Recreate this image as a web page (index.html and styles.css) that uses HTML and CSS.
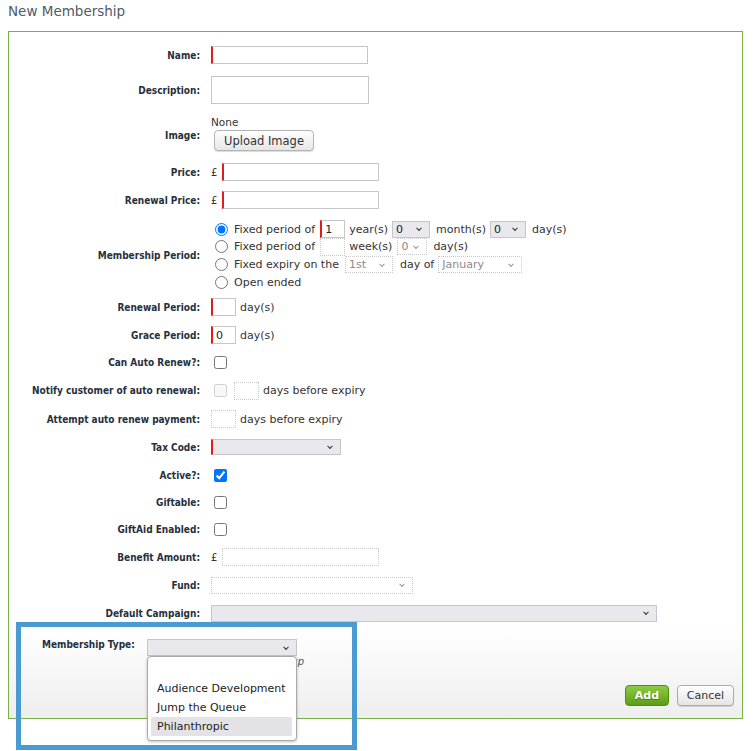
FILE: index.html
```html
<!DOCTYPE html>
<html>
<head>
  <meta charset="utf-8">
  <link rel="stylesheet" href="styles.css">
</head>
<body>
  <h1 class="page-title">New Membership</h1>

  <div class="panel">
    <div class="form-body">
      <div class="form-row">
        <label class="form-label">Name:</label>
        <div class="form-field"><input type="text" class="txt required w-name"></div>
      </div>
      <div class="form-row row-desc">
        <label class="form-label">Description:</label>
        <div class="form-field"><textarea class="txt w-desc"></textarea></div>
      </div>
      <div class="form-row row-image">
        <label class="form-label">Image:</label>
        <div class="form-field">
          <div class="image-name">None</div>
          <button type="button" class="btn btn-upload">Upload Image</button>
        </div>
      </div>
      <div class="form-row">
        <label class="form-label">Price:</label>
        <div class="form-field inline"><span class="currency">£</span><input type="text" class="txt required w-price"></div>
      </div>
      <div class="form-row">
        <label class="form-label">Renewal Price:</label>
        <div class="form-field inline"><span class="currency">£</span><input type="text" class="txt required w-price"></div>
      </div>
      <div class="form-row row-period">
        <label class="form-label">Membership Period:</label>
        <div class="form-field">
          <div class="period-line inline">
            <input type="radio" name="period" checked>
            <span>Fixed period of</span>
            <input type="text" class="txt required w-num" value="1">
            <span>year(s)</span>
            <span class="select-wrap"><select class="sel w-s38"><option>0</option></select></span>
            <span class="after-sel">month(s)</span>
            <span class="select-wrap"><select class="sel w-s36"><option>0</option></select></span>
            <span class="after-sel">day(s)</span>
          </div>
          <div class="period-line inline">
            <input type="radio" name="period">
            <span>Fixed period of</span>
            <input type="text" class="txt off w-num" disabled>
            <span>week(s)</span>
            <span class="select-wrap off"><select class="sel w-s30" disabled><option>0</option></select></span>
            <span class="after-sel">day(s)</span>
          </div>
          <div class="period-line inline">
            <input type="radio" name="period">
            <span>Fixed expiry on the</span>
            <span class="select-wrap off"><select class="sel w-s48" disabled><option>1st</option></select></span>
            <span class="gap-l">day of</span>
            <span class="select-wrap off"><select class="sel w-s84" disabled><option>January</option></select></span>
          </div>
          <div class="period-line inline">
            <input type="radio" name="period">
            <span>Open ended</span>
          </div>
        </div>
      </div>
      <div class="form-row">
        <label class="form-label">Renewal Period:</label>
        <div class="form-field inline"><input type="text" class="txt required w-num"><span>day(s)</span></div>
      </div>
      <div class="form-row">
        <label class="form-label">Grace Period:</label>
        <div class="form-field inline"><input type="text" class="txt required w-num" value="0"><span>day(s)</span></div>
      </div>
      <div class="form-row row-check">
        <label class="form-label">Can Auto Renew?:</label>
        <div class="form-field"><input type="checkbox"></div>
      </div>
      <div class="form-row">
        <label class="form-label">Notify customer of auto renewal:</label>
        <div class="form-field inline"><input type="checkbox" disabled><input type="text" class="txt off w-num" disabled><span>days before expiry</span></div>
      </div>
      <div class="form-row">
        <label class="form-label">Attempt auto renew payment:</label>
        <div class="form-field inline"><input type="text" class="txt off w-num" disabled><span>days before expiry</span></div>
      </div>
      <div class="form-row row-tax">
        <label class="form-label">Tax Code:</label>
        <div class="form-field"><span class="select-wrap"><select class="sel required w-tax"><option></option></select></span></div>
      </div>
      <div class="form-row row-check">
        <label class="form-label">Active?:</label>
        <div class="form-field"><input type="checkbox" checked></div>
      </div>
      <div class="form-row row-check">
        <label class="form-label">Giftable:</label>
        <div class="form-field"><input type="checkbox"></div>
      </div>
      <div class="form-row row-check">
        <label class="form-label">GiftAid Enabled:</label>
        <div class="form-field"><input type="checkbox"></div>
      </div>
      <div class="form-row">
        <label class="form-label">Benefit Amount:</label>
        <div class="form-field inline"><span class="currency">£</span><input type="text" class="txt off w-price" disabled></div>
      </div>
      <div class="form-row">
        <label class="form-label">Fund:</label>
        <div class="form-field"><span class="select-wrap off"><select class="sel w-fund" disabled><option></option></select></span></div>
      </div>
      <div class="form-row">
        <label class="form-label">Default Campaign:</label>
        <div class="form-field"><span class="select-wrap"><select class="sel w-campaign"><option></option></select></span></div>
      </div>
    </div>

    <div class="panel-footer">
      <div class="type-row">
        <label class="type-label">Membership Type:</label>
        <div class="type-field">
          <span class="select-wrap"><select class="sel w-type"><option></option></select></span>
          <div class="type-link"><a href="#">Setup</a></div>
          <ul class="dropdown-list">
            <li></li>
            <li>Audience Development</li>
            <li>Jump the Queue</li>
            <li class="hover">Philanthropic</li>
          </ul>
        </div>
      </div>
      <div class="actions">
        <button type="button" class="btn btn-add">Add</button>
        <button type="button" class="btn btn-cancel">Cancel</button>
      </div>
    </div>
  </div>

  <div class="callout"></div>
</body>
</html>
```

FILE: styles.css
```css
/* Общие стили */
body {
  margin: 0;
  min-height: 100vh;
  font-family: "DejaVu Sans", Verdana, sans-serif;
  font-size: 11px;
  color: #333;
  background: #fff;
}

.page-title {
  margin: 0;
  padding: 3px 8px 0;
  height: 28px;
  font-size: 13.5px;
  font-weight: normal;
  color: #4f5b66;
}

/* Панель формы */
.panel {
  margin: 0 11px 0 8px;
  border: 1px solid #7ab044;
}

.form-body {
  padding-top: 9px;
}

.form-row {
  display: grid;
  grid-template-columns: 191px 1fr;
  column-gap: 11px;
  align-items: center;
  padding: 5px 0;
}

.form-row.row-desc {
  padding: 7px 0 6px;
}

.form-row.row-image {
  padding: 6px 0 7px;
}

.form-row.row-image .form-label {
  padding-top: 3px;
}

.form-row.row-period {
  padding: 6px 0 2px;
}

.form-row.row-check {
  padding: 4px 0;
}

.form-row.row-tax {
  padding: 5px 0 6px;
}

.form-label {
  text-align: right;
  font-family: "DejaVu Sans Condensed", "DejaVu Sans", sans-serif;
  font-weight: bold;
  font-size: 10px;
  color: #26303c;
}

.form-field {
  min-height: 18px;
  display: flex;
  flex-direction: column;
  justify-content: center;
  align-items: flex-start;
}

.form-field.inline,
.inline {
  flex-direction: row;
  justify-content: flex-start;
  align-items: center;
  gap: 4px;
}

/* Поля ввода */
.txt {
  box-sizing: border-box;
  height: 18px;
  margin: 0;
  padding: 0 3px;
  border: 1px solid #c6c6c6;
  font-family: inherit;
  font-size: 11px;
  color: #222;
  background: #fff;
}

.txt.required {
  border-left: 2px solid #e41b1b;
}

.txt.off {
  border: 1px dotted #c8c8c8;
  background: #fff;
}

textarea.txt {
  display: block;
  resize: none;
}

.w-name { width: 157px; }
.w-desc { width: 158px; height: 28px; }
.w-price { width: 157px; }
.w-num { width: 25px; }

.currency {
  width: 7px;
  font-size: 10px;
}

/* Выпадающие списки */
.select-wrap {
  position: relative;
  display: inline-block;
  line-height: 0;
}

.select-wrap::after {
  content: "";
  position: absolute;
  right: 9px;
  top: 50%;
  width: 3px;
  height: 3px;
  border-right: 1px solid #333;
  border-bottom: 1px solid #333;
  transform: translateY(-70%) rotate(45deg);
  pointer-events: none;
}

.select-wrap.off::after {
  border-color: #999;
}

.sel {
  -webkit-appearance: none;
  appearance: none;
  box-sizing: border-box;
  height: 17px;
  margin: 0;
  padding: 0 3px;
  border: 1px solid #c5c5cb;
  border-radius: 0;
  background: #e9e9ed;
  font-family: inherit;
  font-size: 11px;
  color: #222;
  outline: none;
}

.sel.required {
  border-left: 2px solid #e41b1b;
}

.sel:disabled {
  border: 1px dotted #c8c8c8;
  background: #fff;
  color: #8a8a8a;
  opacity: 1;
}

.w-s38 { width: 38px; }
.w-s36 { width: 36px; }
.w-s30 { width: 30px; }
.w-s48 { width: 48px; }
.w-s84 { width: 84px; }
.w-tax { width: 130px; height: 16px; }
.w-fund { width: 202px; }
.w-campaign { width: 446px; }
.w-type { width: 150px; }

.period-line {
  display: flex;
  height: 17.7px;
}

.period-line:first-child {
  height: 18px;
}

.period-line input[type="radio"] {
  margin: 0 2px 0 4px;
}

.period-line .txt {
  margin-left: 1px;
}

.period-line .w-s30 {
  margin-left: 1px;
}

.period-line .w-s48 {
  margin-left: 2px;
}

.after-sel {
  margin-left: 2px;
}

.gap-l {
  margin-left: 3px;
}

input[type="checkbox"] {
  margin: 3px;
}

.image-name {
  line-height: 13px;
  margin-bottom: 1px;
  font-size: 10.5px;
  color: #333;
}

/* Кнопки */
.btn {
  font-family: inherit;
  font-size: 11px;
  cursor: pointer;
  border-radius: 4px;
}

.btn-upload {
  margin-left: 3px;
  width: 100px;
  height: 21px;
  padding: 0;
  font-size: 11.5px;
  color: #333;
  border: 1px solid #b4b4b4;
  background: linear-gradient(#ffffff, #e6e6e6);
  box-shadow: 0 1px 1px rgba(0, 0, 0, 0.15);
}

/* Нижняя часть панели */
.panel-footer {
  padding: 11px 8px 12px 33px;
  background: linear-gradient(#ffffff, #eeeeee);
}

.type-row {
  display: flex;
  align-items: flex-start;
}

.type-label {
  width: 105px;
  padding-top: 1px;
  font-family: "DejaVu Sans Condensed", "DejaVu Sans", sans-serif;
  font-weight: bold;
  font-size: 10px;
  color: #26303c;
}

.type-field {
  position: relative;
  margin-top: 1px;
}

.type-link {
  width: 157px;
  text-align: right;
  line-height: 12px;
  font-size: 10px;
}

.type-link a {
  font-style: italic;
  color: #4a5878;
  text-decoration: none;
}

.dropdown-list {
  position: absolute;
  top: 17px;
  left: 0;
  box-sizing: border-box;
  width: 150px;
  margin: 0;
  padding: 3px 4px 4px 3px;
  list-style: none;
  background: #fff;
  border: 1px solid #a9a9a9;
  border-radius: 4px;
  box-shadow: 0 1px 3px rgba(0, 0, 0, 0.25);
  z-index: 5;
}

.dropdown-list li {
  height: 19px;
  line-height: 19px;
  padding-left: 6px;
  color: #222;
  border-radius: 2px;
}

.dropdown-list li.hover {
  background-color: #e2e2e7;
}

.actions {
  display: flex;
  justify-content: flex-end;
  gap: 8px;
  margin-top: 17px;
}

.btn-add {
  width: 44px;
  height: 21px;
  padding: 0;
  font-weight: bold;
  color: #fff;
  text-shadow: 0 1px 1px rgba(0, 0, 0, 0.35);
  border: 1px solid #4f8d12;
  background: linear-gradient(#8fcb45, #5c9e16);
}

.btn-cancel {
  width: 57px;
  height: 21px;
  padding: 0;
  color: #333;
  border: 1px solid #ababab;
  background: linear-gradient(#ffffff, #e4e4e4);
  box-shadow: 0 1px 1px rgba(0, 0, 0, 0.15);
}

/* Рамка-выделение поверх формы */
.callout {
  position: absolute;
  left: 16px;
  top: 622px;
  box-sizing: border-box;
  width: 341px;
  height: 128px;
  border: 5px solid #4a9bd1;
  z-index: 3;
  pointer-events: none;
}
```
